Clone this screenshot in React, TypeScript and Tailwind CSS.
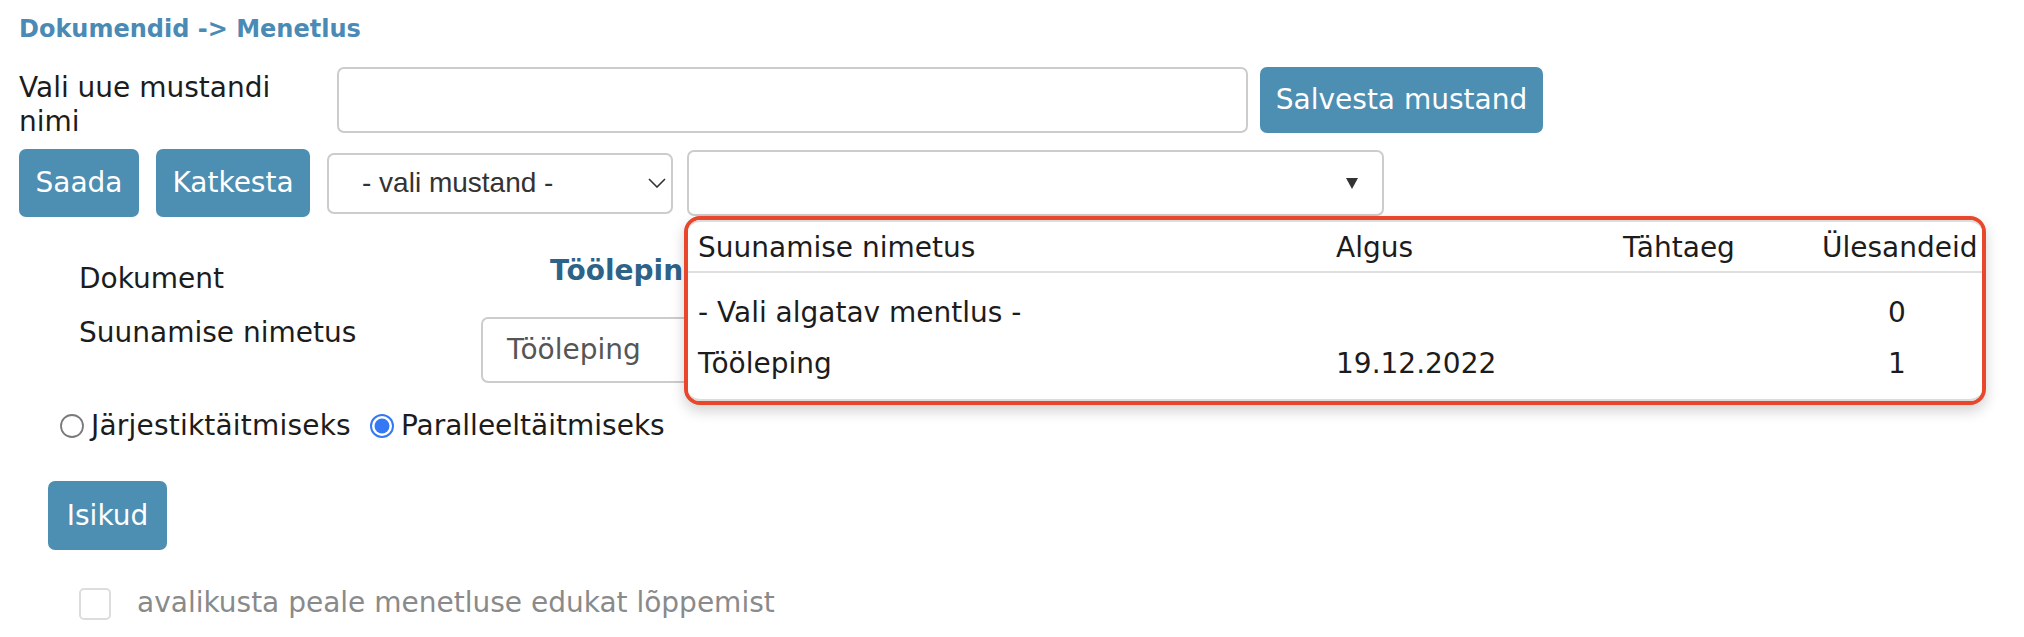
import React from "react";

function Radio({ checked }: { checked?: boolean }) {
  return checked ? (
    <svg width="24" height="24" viewBox="0 0 24 24" className="shrink-0">
      <circle cx="12" cy="12" r="11" fill="#ffffff" stroke="#3478f6" strokeWidth="2" />
      <circle cx="12" cy="12" r="7.5" fill="#3478f6" />
    </svg>
  ) : (
    <svg width="24" height="24" viewBox="0 0 24 24" className="shrink-0">
      <circle cx="12" cy="12" r="11" fill="#ffffff" stroke="#7a7a7a" strokeWidth="1.8" />
    </svg>
  );
}

export default function App() {
  return (
    <div className="min-h-[637px] bg-white pl-[19px] pt-[15px] font-['DejaVu_Sans',sans-serif] text-[28px] leading-[34px] text-[#1c1c1c]">
      {/* Breadcrumb */}
      <div className="text-[24px] font-bold leading-[29px] text-[#4a8ab4]">Dokumendid -&gt; Menetlus</div>

      {/* Row 1 */}
      <div className="mt-[23px] flex items-start">
        <div className="mt-[4px] w-[300px]">Vali uue mustandi nimi</div>
        <div className="ml-[18px] h-[66px] w-[911px] rounded-[7px] border-2 border-[#cccccc] bg-white" />
        <button className="ml-[12px] flex h-[66px] w-[283px] items-center justify-center rounded-[7px] bg-[#4d8eb3] text-white">
          Salvesta mustand
        </button>
      </div>

      {/* Row 2 */}
      <div className="mt-[10px] flex h-[68px] items-center">
        <button className="flex h-[68px] w-[120px] items-center justify-center rounded-[7px] bg-[#4d8eb3] text-white">
          Saada
        </button>
        <button className="ml-[17px] flex h-[68px] w-[154px] items-center justify-center rounded-[7px] bg-[#4d8eb3] text-white">
          Katkesta
        </button>
        <div className="ml-[17px] flex h-[61px] w-[346px] items-center justify-between rounded-[7px] border-2 border-[#cccccc] bg-white pl-[33px] pr-[5px] font-['Liberation_Sans',sans-serif] text-[#333333]">
          <span>- vali mustand -</span>
          <svg width="18" height="10" viewBox="0 0 18 10">
            <polyline points="1,1 9,9 17,1" fill="none" stroke="#333333" strokeWidth="1.6" />
          </svg>
        </div>
        <div className="relative ml-[14px] flex h-[66px] w-[697px] items-center justify-end rounded-[7px] border-2 border-[#cccccc] bg-white pr-[24px]">
          <svg width="12" height="11" viewBox="0 0 12 11">
            <polygon points="0,0 12,0 6,11" fill="#333333" />
          </svg>

          {/* Dropdown panel */}
          <div className="absolute left-[-5px] top-[64px] z-10 h-[189px] w-[1302px] rounded-[16px] border-4 border-[#e8472b] bg-white shadow-[0_6px_14px_rgba(0,0,0,0.18)]">
            <div className="h-full rounded-[12px] border-y-2 border-[#dcdcdc] bg-white">
              <div className="grid grid-cols-[638px_287px_199px_150px] border-b-2 border-[#dedede] px-[10px] pb-[6px] pt-[9px]">
                <div>Suunamise nimetus</div>
                <div>Algus</div>
                <div>Tähtaeg</div>
                <div className="text-center">Ülesandeid</div>
              </div>
              <div className="pt-[14px]">
                <div className="grid h-[51px] grid-cols-[638px_287px_199px_150px] items-center px-[10px]">
                  <div>- Vali algatav mentlus -</div>
                  <div></div>
                  <div></div>
                  <div className="text-center">0</div>
                </div>
                <div className="grid h-[51px] grid-cols-[638px_287px_199px_150px] items-center px-[10px]">
                  <div>Tööleping</div>
                  <div>19.12.2022</div>
                  <div></div>
                  <div className="text-center">1</div>
                </div>
              </div>
            </div>
          </div>
        </div>
      </div>

      {/* Dokument row */}
      <div className="mt-[37px] flex items-start pl-[60px]">
        <div className="mt-[8px] w-[471px]">Dokument</div>
        <div className="font-bold text-[#2d6388]">Tööleping</div>
      </div>

      {/* Suunamise nimetus row */}
      <div className="mt-[20px] flex items-start pl-[60px]">
        <div className="w-[402px]">Suunamise nimetus</div>
        <div className="mt-[1px] flex h-[66px] w-[320px] items-center rounded-[7px] border-2 border-[#cccccc] bg-white pl-[24px] text-[#555555]">
          Tööleping
        </div>
      </div>

      {/* Radio row */}
      <div className="mt-[26px] flex items-center pl-[41px]">
        <Radio />
        <span className="ml-[7px] tracking-[0.2px]">Järjestiktäitmiseks</span>
        <span className="ml-[19px]">
          <Radio checked />
        </span>
        <span className="ml-[7px]">Paralleeltäitmiseks</span>
      </div>

      {/* Isikud */}
      <div className="mt-[38px] pl-[29px]">
        <button className="flex h-[69px] w-[119px] items-center justify-center rounded-[7px] bg-[#4d8eb3] text-white">
          Isikud
        </button>
      </div>

      {/* Checkbox row */}
      <div className="mt-[36px] flex items-start pl-[60px]">
        <div className="mt-[2px] h-[32px] w-[32px] rounded-[5px] border-2 border-[#dddddd] bg-white" />
        <span className="ml-[26px] text-[#8a8a8a]">avalikusta peale menetluse edukat lõppemist</span>
      </div>
    </div>
  );
}
